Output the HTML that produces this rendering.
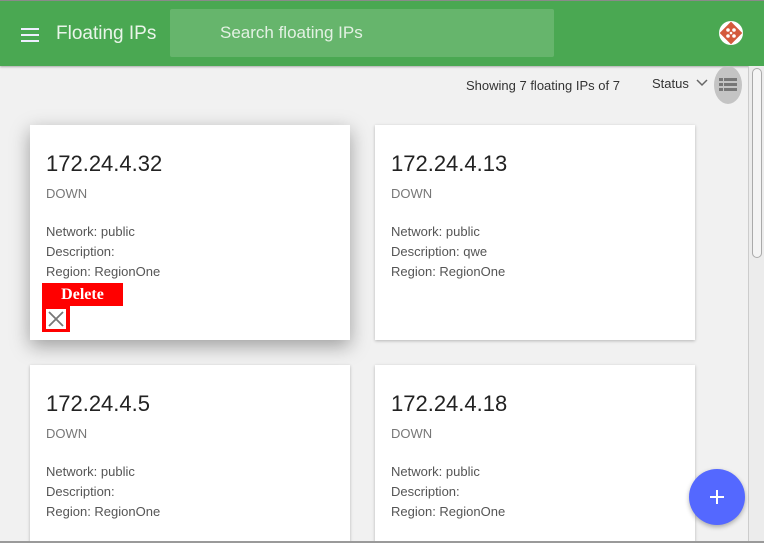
<!DOCTYPE html>
<html><head><style>
*{margin:0;padding:0;box-sizing:border-box}
html,body{width:764px;height:543px;overflow:hidden}
body{background:#f1f1f1;font-family:"Liberation Sans",sans-serif;position:relative}
.hdr{position:absolute;left:0;top:0;width:764px;height:66px;background:#4aa852;border-top:1px solid #8a8a8a;box-shadow:0 1px 2px rgba(0,0,0,.3)}
.menu{position:absolute;left:21px;top:27px;width:18px}
.menu i{display:block;height:2px;background:#eef;margin-bottom:4px}
.title{position:absolute;left:56px;top:22px;color:#eaf5ea;font-size:19px}
.search{position:absolute;left:170px;top:8px;width:384px;height:48px;background:#66b56c;border-radius:2px;color:#e3f1e3;font-size:17px;padding:14px 0 0 50px}
.card{position:absolute;width:320px;background:#fff;box-shadow:0 1px 3px rgba(0,0,0,.25)}
.card .ip{position:absolute;left:16px;top:26px;font-size:22px;color:#222}
.card .st{position:absolute;left:16px;top:61px;font-size:13px;color:#777}
.card .info{position:absolute;left:16px;top:97px;font-size:13px;color:#555;line-height:20px}
.sb{position:absolute;left:748px;top:66px;width:16px;height:477px;background:#ececec;border-left:1px solid #ccc}
.thumb{position:absolute;left:3px;top:2px;width:10px;height:190px;border:1px solid #aaa;border-radius:5px;background:#f4f4f4}
</style></head><body>
<div class="hdr">
<div class="menu"><i></i><i></i><i></i></div>
<div class="title">Floating IPs</div>
<div class="search">Search floating IPs</div>
<svg style="position:absolute;left:719px;top:20px" width="24" height="24" viewBox="0 0 24 24"><circle cx="12" cy="12" r="12" fill="#fff"/><rect x="4" y="4" width="16" height="16" transform="rotate(45 12 12)" fill="#d45a3c"/><g fill="#fff"><circle cx="9" cy="9" r="1.8"/><circle cx="15" cy="9" r="1.8"/><circle cx="9" cy="15" r="1.8"/><circle cx="15" cy="15" r="1.8"/><circle cx="12" cy="12" r="1.3"/></g></svg>
</div>
<div style="position:absolute;left:466px;top:78px;font-size:13px;color:#333">Showing 7 floating IPs of 7</div>
<div style="position:absolute;left:652px;top:76px;font-size:13px;color:#333">Status</div>
<svg style="position:absolute;left:696px;top:79px" width="12" height="8"><path d="M1 1l5 5 5-5" stroke="#666" stroke-width="1.5" fill="none"/></svg>
<div style="position:absolute;left:714px;top:66px;width:28px;height:38px;border-radius:50%;background:#c4c4c4"></div>
<svg style="position:absolute;left:719px;top:78px" width="18" height="14"><g fill="#777"><rect x="0" y="0" width="4" height="3"/><rect x="5" y="0" width="13" height="3"/><rect x="0" y="5" width="4" height="3"/><rect x="5" y="5" width="13" height="3"/><rect x="0" y="10" width="4" height="3"/><rect x="5" y="10" width="13" height="3"/></g></svg>

<div class="card" style="left:30px;top:125px;height:215px;box-shadow:0 6px 18px rgba(0,0,0,.35)">
<div class="ip">172.24.4.32</div><div class="st">DOWN</div>
<div class="info">Network: public<br>Description:<br>Region: RegionOne</div>
<div style="position:absolute;left:12px;top:158px;width:81px;height:23px;background:#f00;color:#fff;font-family:'Liberation Serif',serif;font-weight:bold;font-size:16px;text-align:center;line-height:23px">Delete</div>
<div style="position:absolute;left:12px;top:181px;width:28px;height:26px;background:#f00"><div style="position:absolute;left:4px;top:3px;width:20px;height:20px;background:#fff"><svg width="20" height="20"><path d="M3 3L17 17M17 3L3 17" stroke="#777" stroke-width="1.8"/></svg></div></div>
</div>
<div class="card" style="left:375px;top:125px;height:215px">
<div class="ip">172.24.4.13</div><div class="st">DOWN</div>
<div class="info">Network: public<br>Description: qwe<br>Region: RegionOne</div>
</div>
<div class="card" style="left:30px;top:365px;height:180px">
<div class="ip">172.24.4.5</div><div class="st">DOWN</div>
<div class="info">Network: public<br>Description:<br>Region: RegionOne</div>
</div>
<div class="card" style="left:375px;top:365px;height:180px">
<div class="ip">172.24.4.18</div><div class="st">DOWN</div>
<div class="info">Network: public<br>Description:<br>Region: RegionOne</div>
</div>
<div class="sb"><div class="thumb"></div></div>
<div style="position:absolute;left:0;top:541px;width:764px;height:2px;background:#9a9a9a"></div>
<div style="position:absolute;left:689px;top:469px;width:56px;height:56px;border-radius:50%;background:#5468ff;box-shadow:0 2px 5px rgba(0,0,0,.3)"><svg width="56" height="56"><path d="M28 21v14M21 28h14" stroke="#fff" stroke-width="2"/></svg></div>
</body></html>
